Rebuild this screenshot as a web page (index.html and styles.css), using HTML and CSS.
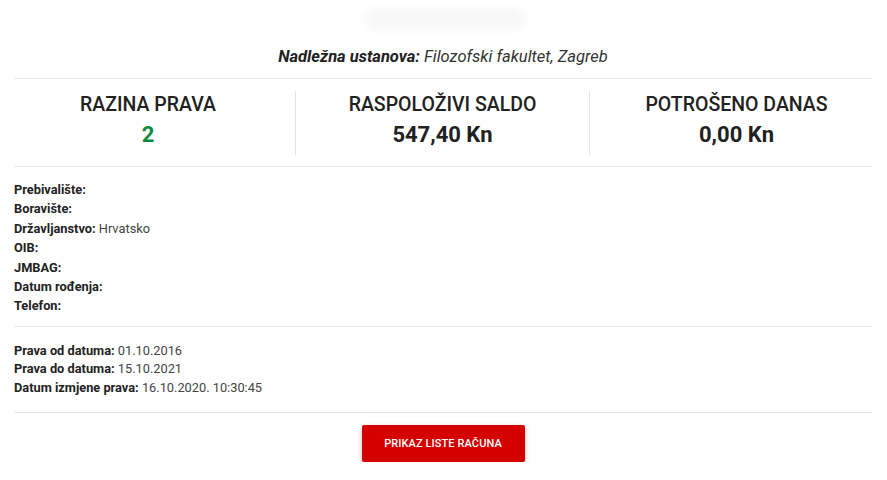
FILE: index.html
```html
<!DOCTYPE html>
<html lang="hr">
<head>
<meta charset="utf-8">
<title>Prava</title>
<link rel="stylesheet" href="styles.css">
</head>
<body>
<div class="page">
  <div class="logo"><div class="logo-blur"></div></div>
  <p class="institution"><b>Nadležna ustanova:</b> Filozofski fakultet, Zagreb</p>
  <hr class="sep">
  <div class="stats">
    <div class="stat">
      <div class="stat-title">RAZINA PRAVA</div>
      <div class="stat-value green">2</div>
    </div>
    <div class="stat">
      <div class="stat-title">RASPOLOŽIVI SALDO</div>
      <div class="stat-value">547,40 Kn</div>
    </div>
    <div class="stat">
      <div class="stat-title">POTROŠENO DANAS</div>
      <div class="stat-value">0,00 Kn</div>
    </div>
  </div>
  <hr class="sep">
  <div class="info info-personal">
    <div class="row"><b>Prebivalište:</b></div>
    <div class="row"><b>Boravište:</b></div>
    <div class="row"><b>Državljanstvo:</b> <span class="val">Hrvatsko</span></div>
    <div class="row"><b>OIB:</b></div>
    <div class="row"><b>JMBAG:</b></div>
    <div class="row"><b>Datum rođenja:</b></div>
    <div class="row"><b>Telefon:</b></div>
  </div>
  <hr class="sep">
  <div class="info info-rights">
    <div class="row"><b>Prava od datuma:</b> <span class="val">01.10.2016</span></div>
    <div class="row"><b>Prava do datuma:</b> <span class="val">15.10.2021</span></div>
    <div class="row"><b>Datum izmjene prava:</b> <span class="val">16.10.2020. 10:30:45</span></div>
  </div>
  <hr class="sep">
  <div class="actions">
    <button class="btn">PRIKAZ LISTE RAČUNA</button>
  </div>
</div>
</body>
</html>
```
FILE: styles.css
```css
* { box-sizing: border-box; }
html, body { margin: 0; padding: 0; background: #fff; }
body {
  font-family: Roboto, "Liberation Sans", sans-serif;
  color: #212121;
}
.page {
  padding: 0 15px 0 14px;
}
.logo {
  height: 46px;
  display: flex;
  justify-content: center;
  align-items: center;
}
.logo-blur {
  width: 160px;
  height: 22px;
  margin-left: 4px;
  margin-top: -8px;
  border-radius: 12px;
  background: #f8f8f8;
  filter: blur(4px);
}
.institution {
  margin: 0 0 10px;
  height: 22px;
  line-height: 22px;
  text-align: center;
  font-size: 16.5px;
  font-style: italic;
  color: #333;
}
.institution b { color: #212121; font-weight: 700; }
.sep {
  margin: 0;
  border: 0;
  border-top: 1px solid #e6e6e6;
}
.stats {
  display: grid;
  grid-template-columns: repeat(3, 1fr);
  margin: 0 -11px 0 -13px;
  padding: 12px 0 11px;
}
.stat {
  height: 64px;
  text-align: center;
  padding-top: 3px;
}
.stat + .stat { border-left: 1px solid #e3e6e9; }
.stat-title {
  font-size: 19.5px;
  font-weight: 500;
  line-height: 22px;
  color: #212121;
}
.stat-value {
  font-size: 22px;
  font-weight: 700;
  line-height: 26px;
  margin-top: 6px;
  color: #212121;
}
.stat-value.green { color: #0b8a3c; }
.info {
  font-size: 12.8px;
  color: #555;
}
.info b { color: #222; font-weight: 700; }
.info-personal { padding: 13px 0 10px; }
.info-personal .row { line-height: 19.4px; height: 19.4px; }
.info-rights { padding: 15px 0 14px; }
.info-rights .row { line-height: 18.6px; height: 18.6px; }
.val { color: #444; }
.actions {
  display: flex;
  justify-content: center;
  padding-top: 12px;
}
.btn {
  width: 163px;
  height: 37px;
  border: 0;
  border-radius: 2px;
  background: #d50000;
  color: #fff;
  font-family: Roboto, "Liberation Sans", sans-serif;
  font-size: 11px;
  font-weight: 500;
  letter-spacing: 0.1px;
  box-shadow: 0 2px 5px rgba(0,0,0,0.26);
  cursor: pointer;
}
```
